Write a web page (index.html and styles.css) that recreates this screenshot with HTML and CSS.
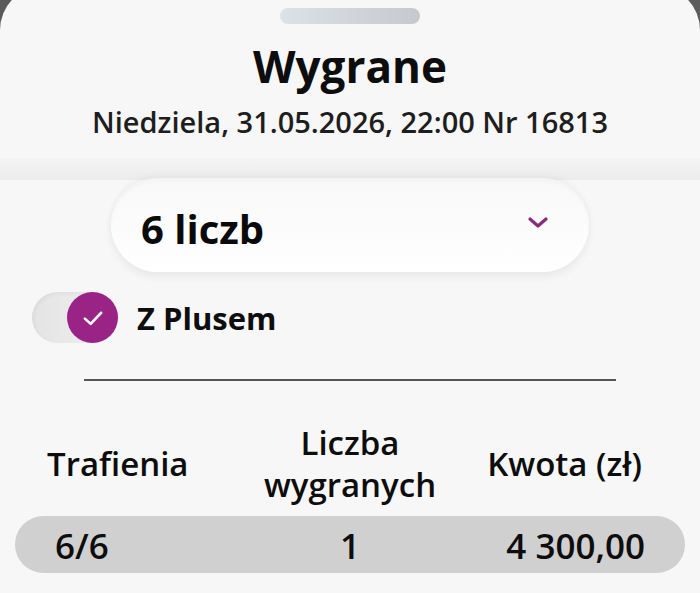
FILE: index.html
```html
<!DOCTYPE html>
<html lang="pl">
<head>
<meta charset="utf-8">
<link rel="stylesheet" href="styles.css">
</head>
<body>
<div class="sheet">
  <div class="handle"></div>
  <h1 class="title">Wygrane</h1>
  <p class="subtitle">Niedziela, 31.05.2026, 22:00 Nr 16813</p>
  <div class="band"></div>
  <div class="select-wrap">
    <div class="select">
      <span class="select-text">6 liczb</span>
      <svg class="chevron" width="22" height="14" viewBox="0 0 22 14"><path d="M3 3 L11 10 L19 3" fill="none" stroke="#8a2a7c" stroke-width="3.2" stroke-linecap="round" stroke-linejoin="round"/></svg>
    </div>
  </div>
  <div class="toggle-row">
    <div class="toggle">
      <div class="knob">
        <svg width="28" height="28" viewBox="0 0 24 24"><path d="M5 12.5 L10 17 L19 7.5" fill="none" stroke="#fff" stroke-width="2.2" stroke-linecap="round" stroke-linejoin="round"/></svg>
      </div>
    </div>
    <span class="toggle-label">Z Plusem</span>
  </div>
  <div class="divider"></div>
  <div class="thead">
    <div class="th c1">Trafienia</div>
    <div class="th c2">Liczba<br>wygranych</div>
    <div class="th c3">Kwota (zł)</div>
  </div>
  <div class="row">
    <div class="td c1">6/6</div>
    <div class="td c2">1</div>
    <div class="td c3">4 300,00</div>
  </div>
  <div class="row plain">
    <div class="td c1">5/6</div>
    <div class="td c2">12</div>
    <div class="td c3">1 200,00</div>
  </div>
</div>
</body>
</html>
```
FILE: styles.css
```css
html, body {
  margin: 0;
  padding: 0;
  height: 100%;
  overflow: hidden;
}
body {
  background: #5b5b5b;
  font-family: "Open Sans", "Noto Sans", sans-serif;
  color: #0d0d0d;
}
.sheet {
  margin-top: -14px;
  padding-top: 22px;
  background: #f7f7f7;
  border-radius: 44px 44px 0 0;
  min-height: 640px;
}
.handle {
  width: 140px;
  height: 16px;
  margin: 0 auto;
  border-radius: 8px;
  background: linear-gradient(90deg, #dde2e8, #c6c9cd);
}
.title {
  margin: 14px 0 0;
  text-align: center;
  font-size: 44px;
  font-weight: 700;
  line-height: 56px;
  font-stretch: 95%;
}
.subtitle {
  margin: 8px 0 0;
  text-align: center;
  font-size: 29px;
  font-weight: 600;
  line-height: 40px;
  color: #1e1e1e;
}
.band {
  height: 22px;
  margin-top: 16px;
  background: linear-gradient(180deg, #f4f4f4, #ececec);
}
.select-wrap {
  display: flex;
  justify-content: center;
  margin-top: -2px;
}
.select {
  width: 478px;
  height: 94px;
  box-sizing: border-box;
  border-radius: 47px;
  background: linear-gradient(180deg, #f8f8f8, #ffffff);
  box-shadow: 0 -3px 6px rgba(0,0,0,0.035), 0 5px 9px rgba(0,0,0,0.06), inset 0 3px 4px rgba(0,0,0,0.025);
  display: flex;
  align-items: center;
  justify-content: space-between;
  padding: 6px 40px 0 30px;
}
.select-text {
  font-size: 40px;
  font-weight: 700;
  color: #0a0a0a;
}
.chevron {
  margin-top: -10px;
}
.toggle-row {
  display: flex;
  align-items: center;
  margin: 20px 0 0 32px;
  gap: 19px;
}
.toggle {
  width: 86px;
  height: 51px;
  border-radius: 26px;
  background: linear-gradient(90deg, #e4e4e4, #f0f0f0);
  box-shadow: inset 2px 2px 4px rgba(0,0,0,0.04);
  display: flex;
  justify-content: flex-end;
  align-items: center;
}
.knob {
  width: 51px;
  height: 51px;
  border-radius: 50%;
  background: #9a2486;
  display: flex;
  align-items: center;
  justify-content: center;
}
.toggle-label {
  font-size: 31px;
  font-weight: 700;
  line-height: 40px;
}
.divider {
  height: 2px;
  background: #555;
  margin: 36px 84px 0;
}
.thead {
  display: grid;
  grid-template-columns: 1fr 1fr 1fr;
  align-items: center;
  margin: 41px 15px 0;
}
.th {
  font-size: 33px;
  font-weight: 600;
  line-height: 42px;
}
.c1 { text-align: left; padding-left: 32px; }
.c2 { text-align: center; }
.c3 { text-align: right; padding-right: 43px; }
.row {
  display: grid;
  grid-template-columns: 1fr 1fr 1fr;
  align-items: center;
  height: 57px;
  margin: 10px 15px 0;
  border-radius: 29px;
  background: #d0d0d0;
}
.row.plain {
  background: transparent;
  margin-top: 7px;
}
.td {
  font-size: 35px;
  font-weight: 600;
  line-height: 46px;
  padding-top: 2px;
}
.row .c1 { padding-left: 40px; }
.row .c3 { padding-right: 40px; }
```
